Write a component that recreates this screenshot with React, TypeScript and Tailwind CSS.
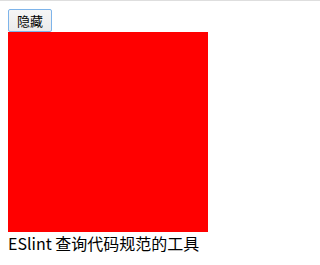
export default function App() {
  return (
    <div className="min-h-[265px] bg-white">
      <div className="h-px bg-[#dedede]" />
      <div className="px-2 pt-2 font-['Microsoft_YaHei','Noto_Sans_CJK_SC',sans-serif] text-black">
        <button className="block h-[23px] w-[44px] rounded-[2px] border border-[#7eb4ea] bg-gradient-to-b from-[#f6f6f6] to-[#ebebeb] text-[13px] font-normal leading-none text-black">
          隐藏
        </button>
        <div className="h-[200px] w-[200px] bg-[#ff0000]" />
        <div className="text-[16px] font-normal leading-[22px]">ESlint 查询代码规范的工具</div>
      </div>
    </div>
  );
}
